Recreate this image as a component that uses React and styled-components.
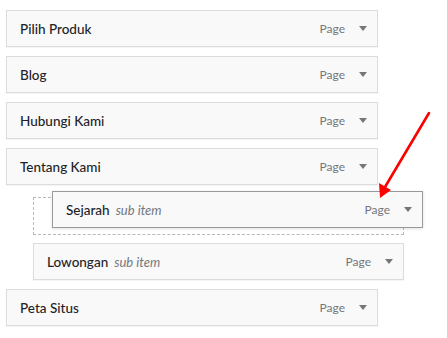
import React from "react";
import styled, { createGlobalStyle } from "styled-components";

const GlobalStyle = createGlobalStyle`
  body {
    margin: 0;
    background: #fff;
    font-family: "Lato", "Open Sans", sans-serif;
  }
`;

const menu = [
  { title: "Pilih Produk" },
  { title: "Blog" },
  { title: "Hubungi Kami" },
  { title: "Tentang Kami" },
  { placeholder: true },
  { title: "Lowongan", sub: true },
  { title: "Peta Situs" },
];

function Caret() {
  return (
    <svg width="8" height="5" viewBox="0 0 8 5">
      <path d="M0 0h8L4 5z" fill="#72777c" />
    </svg>
  );
}

function Item({ title, sub, dragging }) {
  const Box = dragging ? DragHelper : Handle;
  return (
    <Box $sub={sub}>
      <Title>
        {title}
        {(sub || dragging) && <SubLabel>sub item</SubLabel>}
      </Title>
      <Controls>
        <Type>Page</Type>
        <Caret />
      </Controls>
    </Box>
  );
}

export default function App() {
  return (
    <>
      <GlobalStyle />
      <Page>
        <List>
          {menu.map((m, i) =>
            m.placeholder ? (
              <Placeholder key={i}>
                <Item title="Sejarah" dragging />
              </Placeholder>
            ) : (
              <Item key={i} title={m.title} sub={m.sub} />
            )
          )}
        </List>
        <Arrow width="60" height="95" viewBox="0 0 60 95">
          <line x1="57" y1="2" x2="13" y2="76" stroke="#f00" strokeWidth="2.6" strokeLinecap="round" />
          <path d="M8 87 L7 72 L19 79 Z" fill="#f00" />
        </Arrow>
      </Page>
    </>
  );
}

const Page = styled.div`
  position: relative;
  width: 447px;
  height: 338px;
  padding: 10px 0 0 6px;
  box-sizing: border-box;
`;

const List = styled.div`
  display: flex;
  flex-direction: column;
  gap: 9px;
`;

const Handle = styled.div`
  box-sizing: border-box;
  height: 37px;
  margin-left: ${(p) => (p.$sub ? "27px" : "0")};
  width: ${(p) => (p.$sub ? "371px" : "372px")};
  display: flex;
  align-items: center;
  justify-content: space-between;
  padding: 0 10px 0 13px;
  background: #f9f9f9;
  border: 1px solid #dcdcdc;
  box-shadow: 0 1px 1px rgba(0, 0, 0, 0.04);
`;

const DragHelper = styled(Handle)`
  position: absolute;
  left: 18px;
  top: -7px;
  width: 371px;
  border-color: #999;
  box-shadow: 0 1px 3px rgba(0, 0, 0, 0.12);
`;

const Placeholder = styled.div`
  position: relative;
  box-sizing: border-box;
  margin: 3px 0 -1px 27px;
  width: 371px;
  height: 38px;
  border: 1px dashed #b4b9be;
`;

const Title = styled.div`
  font-size: 13.5px;
  font-weight: 500;
  color: #1d2327;
  display: flex;
  align-items: baseline;
  gap: 6px;
`;

const SubLabel = styled.span`
  font-size: 13px;
  font-style: italic;
  font-weight: 400;
  color: #72777c;
`;

const Controls = styled.div`
  display: flex;
  align-items: center;
  gap: 14px;
`;

const Type = styled.span`
  font-size: 12px;
  color: #72777c;
`;

const Arrow = styled.svg`
  position: absolute;
  left: 372px;
  top: 111px;
`;
